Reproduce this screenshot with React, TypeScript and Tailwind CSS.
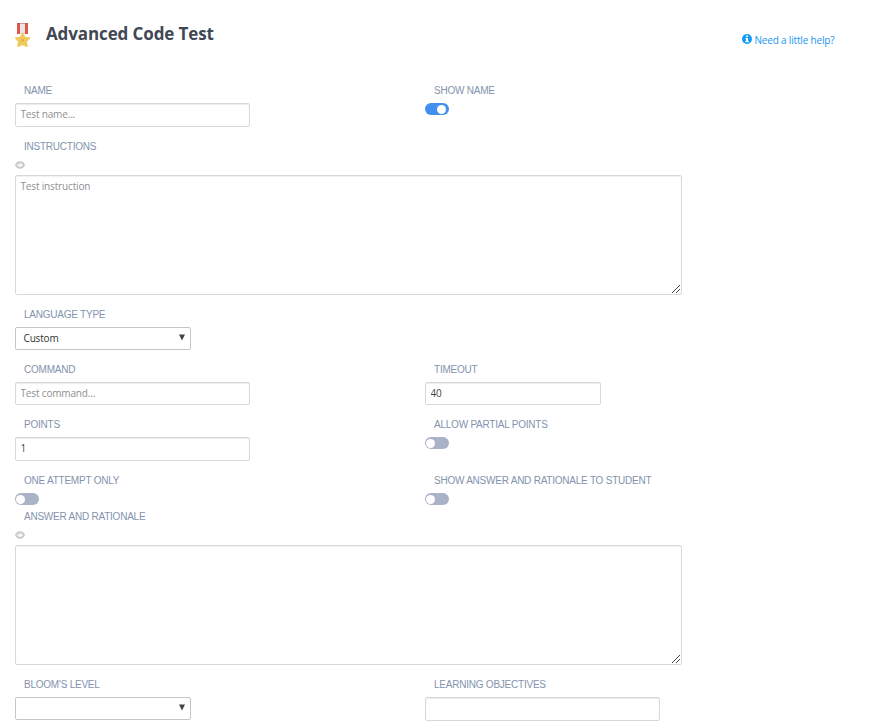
import type { ReactNode } from 'react';

function Medal() {
  return (
    <svg width="16" height="25" viewBox="0 0 16 25" className="block">
      <path d="M2 0h11v9l-5.500 3L2 9z" fill="#e9e6e4" />
      <path d="M2 0h3v11H2zM10 0h3v11h-3z" fill="#e0584c" />
      <path d="M2 0h11v1H2z" fill="#b5534b" fillOpacity=".5" />
      <path
        d="M7.500 10l2.300 4.300 4.900.7-3.400 3.500.9 5-4.700-2.100-4.700 2.100.9-5L.3 15l4.900-.7z"
        fill="#f2c95c"
        stroke="#f2c95c"
        strokeWidth="1.200"
        strokeLinejoin="round"
      />
      <circle cx="7.500" cy="17.200" r="1.600" fill="#dfb452" />
    </svg>
  );
}

function Label({ children }: { children: ReactNode }) {
  return (
    <div className="h-5 pl-[9px] font-['Liberation_Sans',Arial,sans-serif] text-[10px] leading-[15px] tracking-[-0.23px] whitespace-nowrap text-[#8393ad]">
      {children}
    </div>
  );
}

function Field({ label, children }: { label: string; children?: ReactNode }) {
  return (
    <div className="w-[410px] shrink-0">
      <Label>{label}</Label>
      {children}
    </div>
  );
}

function TextBox({ className, value, placeholder }: { className: string; value?: string; placeholder?: string }) {
  return (
    <input
      defaultValue={value}
      placeholder={placeholder}
      className={`block rounded-[2px] border border-[#d8d8d8] bg-white px-[4.5px] pb-[2px] text-[10px] tracking-[-0.16px] text-[#444] shadow-[inset_0_1px_1px_rgba(0,0,0,0.08)] outline-none placeholder:text-[#8f8f8f] ${className}`}
    />
  );
}

function Toggle({ on = false }: { on?: boolean }) {
  return (
    <div
      className={`flex h-3 w-6 items-center rounded-full ${on ? 'justify-end bg-[#4290ee] pr-[3px]' : 'justify-start bg-[#a9b2c6] pl-px'}`}
    >
      <span className="size-[9px] rounded-full bg-white" />
    </div>
  );
}

function Select({ value }: { value?: string }) {
  return (
    <div className="flex h-[23px] w-[176px] items-center justify-between rounded-[2px] border border-[#c6c6c6] bg-white pr-[5px] pl-[7.5px] text-[10px] tracking-[-0.16px] text-[#333]">
      <span>{value}</span>
      <svg width="6" height="7" viewBox="0 0 6 7" className="-mt-[2px]">
        <path d="M0 .5h6L3 6.500z" fill="#444" />
      </svg>
    </div>
  );
}

function Editor({ label, text }: { label: string; text?: string }) {
  return (
    <div className="h-[168px]">
      <Label>{label}</Label>
      <svg width="10" height="8" viewBox="0 0 10 8" className="mt-[2px] mb-[6px] block">
        <path
          d="M.7 4C1.600 2 3.200 1 5 1S8.400 2 9.300 4C8.400 6 6.800 7 5 7S1.600 6 .7 4z"
          fill="#fff"
          stroke="#c2c4c8"
          strokeWidth="1.300"
        />
        <circle cx="5" cy="4" r="2.300" fill="none" stroke="#c9cbce" strokeWidth=".8" />
        <circle cx="4.300" cy="3.300" r=".8" fill="#d2d4d7" />
      </svg>
      <div className="flex h-[120px] w-[667px] justify-between rounded-[2px] border border-[#d8d8d8] bg-white pr-px pb-px pl-[4.5px] shadow-[inset_0_1px_1px_rgba(0,0,0,0.06)]">
        <span className="pt-[3px] text-[10px] leading-[15px] tracking-[-0.16px] text-[#8f8f8f]">{text}</span>
        <svg width="8" height="8" viewBox="0 0 8 8" className="self-end">
          <path d="M0 8L8 0M4 8l4-4" stroke="#444" strokeWidth="1" />
        </svg>
      </div>
    </div>
  );
}

export default function App() {
  return (
    <main className="h-[728px] w-[896px] overflow-hidden bg-white pl-[15px] font-['Open_Sans',sans-serif]">
      <header className="flex h-[83px] items-start">
        <div className="w-[31px] shrink-0 pt-[23px]">
          <Medal />
        </div>
        <h1 className="w-[696px] pt-[22px] text-[17px] leading-[24px] font-bold tracking-[-0.11px] text-[#3f4854]">
          Advanced Code Test
        </h1>
        <a className="flex items-start pt-[33px] text-[10px] leading-[15px] tracking-[-0.18px] whitespace-nowrap text-[#2196f3]">
          <svg width="10" height="10" viewBox="0 0 10 10" className="mt-px mr-[2.500px]">
            <circle cx="5" cy="5" r="5" fill="#169bf5" />
            <path d="M4 1.500h2V3H4zM3.500 4H6v3h.7v1.200H3.400V7H4V5.100h-.5z" fill="#fff" />
          </svg>
          Need a little help?
        </a>
      </header>

      <div className="flex h-14">
        <Field label="NAME">
          <TextBox className="h-6 w-[235px]" placeholder="Test name..." />
        </Field>
        <Field label="SHOW NAME">
          <Toggle on />
        </Field>
      </div>

      <Editor label="INSTRUCTIONS" text="Test instruction" />

      <div className="flex h-[55px]">
        <Field label="LANGUAGE TYPE">
          <Select value="Custom" />
        </Field>
      </div>

      <div className="flex h-[55px]">
        <Field label="COMMAND">
          <TextBox className="h-[23px] w-[235px]" placeholder="Test command..." />
        </Field>
        <Field label="TIMEOUT">
          <TextBox className="h-[23px] w-[176px]" value="40" />
        </Field>
      </div>

      <div className="flex h-14">
        <Field label="POINTS">
          <TextBox className="h-6 w-[235px]" value="1" />
        </Field>
        <Field label="ALLOW PARTIAL POINTS">
          <Toggle />
        </Field>
      </div>

      <div className="flex h-9">
        <Field label="ONE ATTEMPT ONLY">
          <Toggle />
        </Field>
        <Field label="SHOW ANSWER AND RATIONALE TO STUDENT">
          <Toggle />
        </Field>
      </div>

      <Editor label="ANSWER AND RATIONALE" />

      <div className="flex h-[51px]">
        <Field label="BLOOM'S LEVEL">
          <Select />
        </Field>
        <Field label="LEARNING OBJECTIVES">
          <TextBox className="h-6 w-[235px]" />
        </Field>
      </div>
    </main>
  );
}
